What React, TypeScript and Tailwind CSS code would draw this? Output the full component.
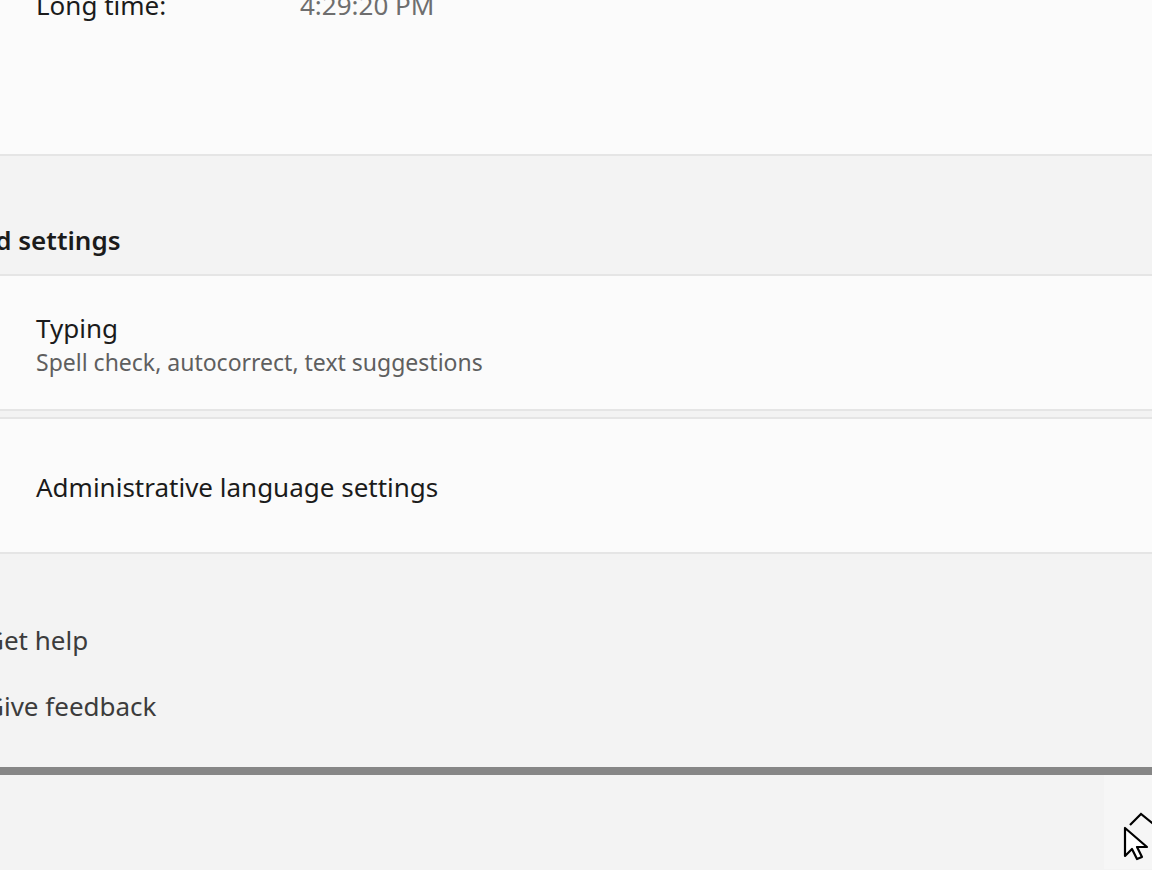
import React from "react";

const font = { fontFamily: '"Noto Sans", "Open Sans", sans-serif' };

const Cursor: React.FC = () => (
  <svg
    className="absolute left-[1122px] top-[810px]"
    width="34"
    height="52"
    viewBox="0 0 34 52"
  >
    <path
      d="M3 18 L3 46 L10 39 L15 49 L20 47 L15 37 L25 37 Z"
      fill="#ffffff"
      stroke="#000000"
      strokeWidth="2.2"
      strokeLinejoin="round"
    />
    <path
      d="M8 15 L19 4 L34 16"
      fill="none"
      stroke="#000000"
      strokeWidth="2.2"
    />
  </svg>
);

export default function App() {
  return (
    <div
      className="relative w-[1152px] h-[870px] overflow-hidden bg-[#f3f3f3] text-[#1b1b1b]"
      style={font}
    >
      {/* Time formats card (cut off at top) */}
      <div className="h-[156px] flex flex-col bg-[#fbfbfb] border-b-2 border-[#e5e5e5]">
        <div className="flex items-center -mt-[13px] pl-9 text-[26px] leading-[36px]">
          <span className="w-[264px]">Long time:</span>
          <span className="text-[#6e6e6e]">4:29:20 PM</span>
        </div>
      </div>

      {/* Section header */}
      <div className="h-[118px] flex items-center pt-[50px]">
        <span className="-ml-[85px] text-[26px] font-semibold">
          Related settings
        </span>
      </div>

      {/* Typing */}
      <div className="h-[137px] bg-[#fbfbfb] border-y-2 border-[#e5e5e5] flex flex-col justify-center pl-9 pt-[4px]">
        <span className="text-[26px] leading-[34px]">Typing</span>
        <span className="text-[23px] leading-[34px] text-[#5f5f5f]">
          Spell check, autocorrect, text suggestions
        </span>
      </div>

      <div className="h-[6px]" />

      {/* Administrative language settings */}
      <div className="h-[137px] bg-[#fbfbfb] border-y-2 border-[#e5e5e5] flex items-center pl-9 pt-[4px]">
        <span className="text-[26px]">Administrative language settings</span>
      </div>

      {/* Help links */}
      <div className="h-[213px] flex flex-col pt-[68px] gap-[30px] text-[26px] text-[#3c3c3c]">
        <span className="-ml-[15px] leading-[36px]">Get help</span>
        <span className="-ml-[15px] leading-[36px]">Give feedback</span>
      </div>

      {/* Gray divider */}
      <div className="h-[8px] bg-[#868686]" />

      {/* Bottom strip */}
      <div className="flex h-[94px]">
        <div className="flex-1 bg-[#f3f3f3]" />
        <div className="w-[48px] bg-[#f6f6f6]" />
      </div>

      <Cursor />
    </div>
  );
}
